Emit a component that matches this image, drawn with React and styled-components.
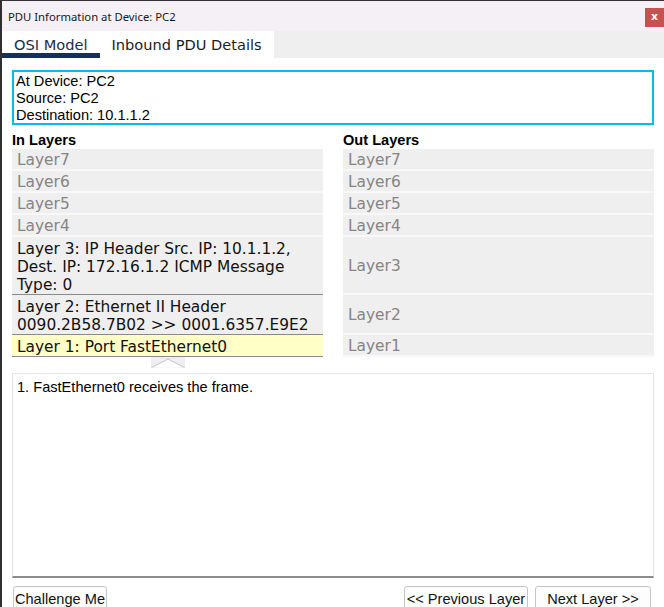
import styled, { createGlobalStyle } from 'styled-components'

const Global = createGlobalStyle`
  html, body {
    margin: 0;
    padding: 0;
    background: #ffffff;
    overflow: hidden;
  }
`

const Window = styled.div`
  width: 664px;
  height: 607px;
  box-sizing: border-box;
  border-left: 2px solid #2f2f2f;
  border-top: 1px solid #333333;
  display: flex;
  flex-direction: column;
  background: #ffffff;
  overflow: hidden;
`

const TitleBar = styled.div`
  height: 30px;
  flex: none;
  display: flex;
  align-items: center;
  justify-content: space-between;
  padding-left: 6px;
  background: #f4f0f5;
  font-family: 'Noto Sans', 'Open Sans', sans-serif;
  font-size: 11.3px;
  color: #1a1a1a;
`

const CloseButton = styled.div`
  width: 19px;
  height: 19px;
  margin-top: 2px;
  background: #c75050;
  color: #ffffff;
  font-family: 'DejaVu Sans', sans-serif;
  font-weight: bold;
  font-size: 11px;
  display: flex;
  align-items: center;
  justify-content: center;
  padding-bottom: 2px;
  box-sizing: border-box;
`

const TabBar = styled.div`
  height: 27px;
  flex: none;
  display: flex;
  background: #efefef;
`

const Tab = styled.div`
  padding: 0 12px;
  background: #ffffff;
  font-family: 'DejaVu Sans', Verdana, sans-serif;
  font-size: 14.6px;
  line-height: 27px;
  color: ${(p) => (p.$active ? '#1b2d4c' : '#1c1c1c')};
  box-shadow: ${(p) => (p.$active ? 'inset 0 -5px 0 #17305a' : 'none')};
`

const Body = styled.div`
  flex: 1;
  display: flex;
  flex-direction: column;
  padding: 12px 10px 0 10px;
`

const InfoBox = styled.div`
  height: 55px;
  box-sizing: border-box;
  border: 2px solid #00bfe6;
  padding: 1px 2px;
  font-family: 'Liberation Sans', Arial, sans-serif;
  font-size: 14.6px;
  line-height: 17px;
  color: #000000;
`

const LayerGrid = styled.div`
  display: grid;
  grid-template-columns: 311px 311px;
  column-gap: 20px;
  margin-top: 3px;
`

const Heading = styled.div`
  height: 21px;
  display: flex;
  align-items: flex-end;
  font-family: 'Liberation Sans', Arial, sans-serif;
  font-weight: bold;
  font-size: 14.6px;
  line-height: 17px;
  color: #000000;
`

const InCell = styled.div`
  grid-column: 1;
  font-family: 'DejaVu Sans', Verdana, sans-serif;
  font-size: 15.4px;
  line-height: 18px;
  padding: ${(p) => (p.$active ? '3px 5px 0' : '2px 5px 0')};
  background: ${(p) => (p.$current ? '#ffffc6' : '#efefef')};
  color: ${(p) => (p.$active ? '#111111' : '#858585')};
  border-bottom: ${(p) => (p.$active ? '1px solid #8a8a8a' : '2px solid #f8f8f8')};
`

const OutCell = styled.div`
  grid-column: 2;
  display: flex;
  align-items: center;
  font-family: 'DejaVu Sans', Verdana, sans-serif;
  font-size: 15.4px;
  line-height: 18px;
  padding: 2px 5px 0;
  background: #efefef;
  color: #858585;
  border-bottom: 2px solid #f8f8f8;
`

const ArrowRow = styled.div`
  width: 311px;
  height: 16px;
  display: flex;
  justify-content: center;
`

const Description = styled.div`
  flex: none;
  height: 205px;
  box-sizing: border-box;
  border: 1px solid #e4e4e4;
  border-bottom: 2px solid #8c8c8c;
  padding: 5px 4px;
  font-family: 'Liberation Sans', Arial, sans-serif;
  font-size: 14.6px;
  line-height: 17px;
  color: #000000;
`

const Footer = styled.div`
  display: flex;
  justify-content: space-between;
  padding: 8px 3px 0 1px;
`

const ButtonGroup = styled.div`
  display: flex;
  gap: 7px;
`

const Button = styled.button`
  width: ${(p) => p.$w}px;
  height: 25px;
  padding: 0;
  background: #fdfdfd;
  border: 1px solid #c6c6c6;
  border-radius: 3px;
  font-family: 'Liberation Sans', Arial, sans-serif;
  font-size: 14.6px;
  color: #111111;
  cursor: pointer;
`

const layers = [
  { n: 7 },
  { n: 6 },
  { n: 5 },
  { n: 4 },
  {
    n: 3,
    lines: ['Layer 3: IP Header Src. IP: 10.1.1.2,', 'Dest. IP: 172.16.1.2 ICMP Message', 'Type: 0'],
  },
  { n: 2, lines: ['Layer 2: Ethernet II Header', '0090.2B58.7B02 >> 0001.6357.E9E2'] },
  { n: 1, lines: ['Layer 1: Port FastEthernet0'], current: true },
]

const UpArrow = () => (
  <svg width="34" height="11" viewBox="0 0 34 11">
    <rect x="0" y="0" width="34" height="11" fill="#efefef" />
    <path d="M0.5 10.5 L17 2 L33.5 10.5" fill="#ffffff" stroke="#c4c4c4" strokeWidth="1" />
  </svg>
)

export default function App() {
  return (
    <>
      <Global />
      <Window>
        <TitleBar>
          <span>PDU Information at Device: PC2</span>
          <CloseButton>x</CloseButton>
        </TitleBar>
        <TabBar>
          <Tab $active>OSI Model</Tab>
          <Tab>Inbound PDU Details</Tab>
        </TabBar>
        <Body>
          <InfoBox>
            At Device: PC2
            <br />
            Source: PC2
            <br />
            Destination: 10.1.1.2
          </InfoBox>
          <LayerGrid>
            <Heading>In Layers</Heading>
            <Heading>Out Layers</Heading>
            {layers.map((l) => [
              <InCell key={'in' + l.n} $active={!!l.lines} $current={l.current}>
                {l.lines
                  ? l.lines.map((t, i) => (
                      <div key={i}>{t}</div>
                    ))
                  : 'Layer' + l.n}
              </InCell>,
              <OutCell key={'out' + l.n}>{'Layer' + l.n}</OutCell>,
            ])}
          </LayerGrid>
          <ArrowRow>
            <UpArrow />
          </ArrowRow>
          <Description>1. FastEthernet0 receives the frame.</Description>
          <Footer>
            <Button $w={94}>Challenge Me</Button>
            <ButtonGroup>
              <Button $w={124}>&lt;&lt; Previous Layer</Button>
              <Button $w={116}>Next Layer &gt;&gt;</Button>
            </ButtonGroup>
          </Footer>
        </Body>
      </Window>
    </>
  )
}
